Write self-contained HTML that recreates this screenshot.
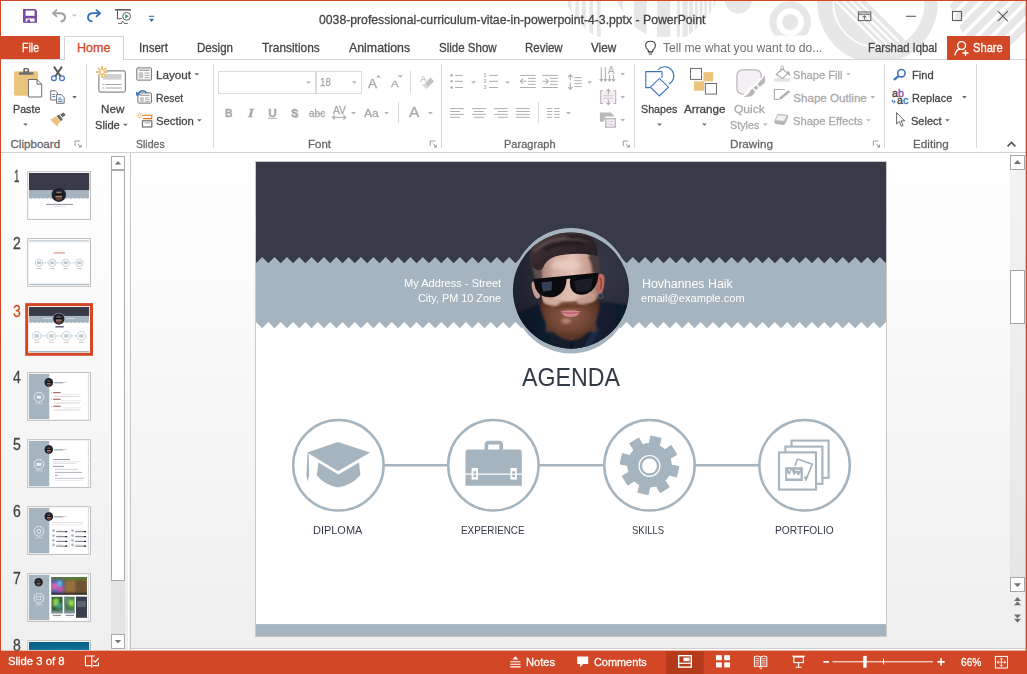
<!DOCTYPE html>
<html><head><meta charset="utf-8"><title>PowerPoint</title>
<style>
html,body{margin:0;padding:0;background:#fff;}
body{width:1027px;height:674px;position:relative;overflow:hidden;font-family:"Liberation Sans",sans-serif;}
.b{position:absolute;display:block;}
.t{position:absolute;white-space:nowrap;transform-origin:0 50%;line-height:normal;-webkit-text-stroke:0.28px;}
.t.n{-webkit-text-stroke:0;}
svg{overflow:visible;}
</style></head><body>
<div class="b" style="left:0px;top:0px;width:1027px;height:674px;background:#fff;"></div>
<div class="b" style="left:0px;top:153px;width:1027px;height:497px;background:linear-gradient(#ffffff,#f9f9f9 35%,#efefef);"></div>
<svg class="b" style="left:0;top:0;overflow:hidden" width="1027" height="60" viewBox="0 0 1027 60"><defs></defs><clipPath id="cpA"><circle cx="641" cy="-32.300" r="82.600"/></clipPath><clipPath id="cpA2"><rect x="555" y="0" width="175" height="36.800"/></clipPath><g clip-path="url(#cpA2)"><g clip-path="url(#cpA)"><rect x="567.9" y="0" width="3.8" height="40" fill="#e7e7e7"/><rect x="575.3" y="0" width="3.6" height="40" fill="#e7e7e7"/><rect x="581.9" y="0" width="3.9" height="40" fill="#e7e7e7"/><rect x="589.4" y="0" width="3.6" height="40" fill="#e7e7e7"/><rect x="596.8" y="0" width="3.9" height="40" fill="#e7e7e7"/><rect x="657.1" y="0" width="13.1" height="40" fill="#e7e7e7"/><rect x="676.8" y="0" width="3.1" height="40" fill="#e7e7e7"/><rect x="682.5" y="0" width="5.3" height="40" fill="#e7e7e7"/><rect x="689" y="0" width="4" height="40" fill="#e7e7e7"/><rect x="694.8" y="0" width="3" height="40" fill="#e7e7e7"/><rect x="699.6" y="0" width="3.1" height="40" fill="#e7e7e7"/><rect x="704.4" y="0" width="2.6" height="40" fill="#e7e7e7"/><rect x="708.8" y="0" width="2.6" height="40" fill="#e7e7e7"/><rect x="713.2" y="0" width="2.2" height="40" fill="#e7e7e7"/><rect x="717.4" y="0" width="2" height="40" fill="#e7e7e7"/><path d="M616.100 0h7v12.200z" fill="#e7e7e7"/><path d="M634 0h12.600v34.500l-12.600-8z" fill="#e7e7e7"/></g></g><circle cx="738.4" cy="0" r="13.6" fill="#e7e7e7"/><clipPath id="cpB"><rect x="760" y="0" width="60" height="35.6"/></clipPath><g clip-path="url(#cpB)"><circle cx="790.2" cy="22" r="17.2" fill="none" stroke="#e7e7e7" stroke-width="7"/><circle cx="790.2" cy="22" r="8" fill="#e7e7e7"/></g><circle cx="877.500" cy="3" r="60.300" fill="#e7e7e7"/><clipPath id="cpC"><circle cx="877.500" cy="3" r="44.500"/></clipPath><clipPath id="cpC3"><circle cx="877.500" cy="3" r="47"/></clipPath><clipPath id="cpC2"><path d="M800 -30L800 80L900 80L840 -30z"/></clipPath><g clip-path="url(#cpC3)"><path d="M865.200 0L945.200 80L990 80L990 -20L845.200 -20z" fill="#fff"/></g><g clip-path="url(#cpC)"><path d="M825.0 -10l90 90" stroke="#fff" stroke-width="2.100"/><path d="M832.4 -10l90 90" stroke="#fff" stroke-width="2.100"/><path d="M839.8 -10l90 90" stroke="#fff" stroke-width="2.100"/><path d="M847.2 -10l90 90" stroke="#fff" stroke-width="2.100"/></g><g clip-path="url(#cpC2)"><circle cx="877.500" cy="3" r="44.200" fill="none" stroke="#fff" stroke-width="1.600"/></g><clipPath id="cpD"><path d="M947.200 0L975 60h60v-60z"/></clipPath><clipPath id="cpD2"><circle cx="955" cy="75" r="106"/></clipPath><g clip-path="url(#cpD2)"><g clip-path="url(#cpD)"><path d="M970.0 -10l-90 90" stroke="#e7e7e7" stroke-width="7"/><path d="M985.2 -10l-90 90" stroke="#e7e7e7" stroke-width="7"/><path d="M1000.4 -10l-90 90" stroke="#e7e7e7" stroke-width="7"/><path d="M1015.6 -10l-90 90" stroke="#e7e7e7" stroke-width="7"/><path d="M1030.8 -10l-90 90" stroke="#e7e7e7" stroke-width="7"/><path d="M1046.0 -10l-90 90" stroke="#e7e7e7" stroke-width="7"/><path d="M1061.2 -10l-90 90" stroke="#e7e7e7" stroke-width="7"/></g></g></svg>
<span class="t" style="left:319.20px;top:12.64px;font-size:12px;color:#444;transform:scaleX(1.0184);">0038-professional-curriculum-vitae-in-powerpoint-4-3.pptx - PowerPoint</span>
<div class="b" style="left:1px;top:36px;width:59px;height:24px;background:#d24726;"></div>
<span class="t" style="left:21.80px;top:40.69px;font-size:12.5px;color:#fff;transform:scaleX(0.8440);">File</span>
<div class="b" style="left:1px;top:59px;width:1025px;height:1px;background:#d4d4d4;"></div>
<div class="b" style="left:64px;top:36px;width:60px;height:24px;background:#fff;border:1px solid #d4d4d4;border-bottom:none;box-sizing:border-box;"></div>
<span class="t" style="left:77.00px;top:40.69px;font-size:12.5px;color:#d24726;">Home</span>
<span class="t" style="left:139.20px;top:40.69px;font-size:12.5px;color:#444;transform:scaleX(0.9244);">Insert</span>
<span class="t" style="left:197.00px;top:40.69px;font-size:12.5px;color:#444;transform:scaleX(0.9252);">Design</span>
<span class="t" style="left:262.30px;top:40.69px;font-size:12.5px;color:#444;transform:scaleX(0.9511);">Transitions</span>
<span class="t" style="left:348.90px;top:40.69px;font-size:12.5px;color:#444;transform:scaleX(0.9881);">Animations</span>
<span class="t" style="left:438.50px;top:40.69px;font-size:12.5px;color:#444;transform:scaleX(0.9227);">Slide Show</span>
<span class="t" style="left:525.00px;top:40.69px;font-size:12.5px;color:#444;transform:scaleX(0.9174);">Review</span>
<span class="t" style="left:590.80px;top:40.69px;font-size:12.5px;color:#444;transform:scaleX(0.9379);">View</span>
<span class="t n" style="left:662.60px;top:40.69px;font-size:12.5px;color:#707070;transform:scaleX(0.9680);">Tell me what you want to do...</span>
<span class="t" style="left:867.90px;top:40.69px;font-size:12.5px;color:#444;transform:scaleX(0.9040);">Farshad Iqbal</span>
<div class="b" style="left:947px;top:36px;width:63px;height:24px;background:#d24726;"></div>
<span class="t" style="left:972.50px;top:40.69px;font-size:12.5px;color:#fff;transform:scaleX(0.8934);">Share</span>
<svg class="b" style="left:0;top:0" width="1027" height="60" viewBox="0 0 1027 60"><path d="M23 9h12.200l1.800 1.800v12h-14z" fill="#7b4aa6"/><rect x="25.600" y="10.600" width="9" height="5.200" fill="#fff"/><rect x="25.600" y="18.400" width="9" height="4.400" fill="#fff"/><rect x="27.400" y="19.600" width="2.600" height="3.200" fill="#7b4aa6"/><rect x="24.800" y="21.600" width="10.400" height="1.200" fill="#7b4aa6"/><path d="M53 13.200h6.600q5.400 0 5.400 4.400q0 3.400-4.400 4" fill="none" stroke="#a0a0a0" stroke-width="2"/><path d="M57 9.600l-4 3.600l4 3.600" fill="none" stroke="#a0a0a0" stroke-width="1.800"/><path d="M71.800 14.400h5.200l-2.600 2.400z" fill="#c0c0c0"/><path d="M100 13.200h-6.600q-5.400 0-5.400 4.400q0 3.400 4.400 4" fill="none" stroke="#2f6fb7" stroke-width="1.800"/><path d="M96 9.600l4 3.600l-4 3.600" fill="none" stroke="#2f6fb7" stroke-width="1.800"/><path d="M115 9.800h16" stroke="#5e5e5e" stroke-width="1.600"/><path d="M117.500 10.600v8.100h4.600" fill="none" stroke="#5e5e5e" stroke-width="1.100"/><circle cx="126.600" cy="16.300" r="3.900" fill="#fff" stroke="#5e5e5e" stroke-width="1"/><path d="M125.200 14l3.600 2.300l-3.600 2.300z" fill="#3a9b6a"/><path d="M118 23.400h4M124 23.400h4M122.600 21l-1.200 2.400M122.600 21l1.800 2.400" stroke="#5e5e5e" stroke-width="0.900"/><path d="M149 16.300h5.200" stroke="#2f6fb7" stroke-width="1.100"/><path d="M149 18.800h5.200l-2.600 3.200z" fill="#2f6fb7"/><rect x="858.400" y="12" width="12.400" height="8.600" fill="none" stroke="#5e5e5e" stroke-width="1"/><path d="M858.400 14.200h12.400" stroke="#5e5e5e" stroke-width="1"/><path d="M864.600 19.400v-3.600M862.800 17.400l1.800-1.800l1.800 1.800" fill="none" stroke="#5e5e5e" stroke-width="0.900"/><path d="M906 16.300h10" stroke="#5e5e5e" stroke-width="1.100"/><rect x="952.500" y="11.500" width="9" height="9" fill="none" stroke="#5e5e5e" stroke-width="1.100"/><path d="M997.800 11.200l10 10M1007.800 11.200l-10 10" stroke="#5e5e5e" stroke-width="1.100"/><path d="M648.300 50.200q-2.700-2-2.700-4.600q0-4.400 4.900-4.400q4.900 0 4.900 4.400q0 2.600-2.700 4.600v1.600h-4.400z" fill="none" stroke="#444" stroke-width="1.100"/><path d="M648.300 52h4.400M648.700 54h3.600" stroke="#444" stroke-width="1"/><circle cx="961.600" cy="45.500" r="3.900" fill="none" stroke="#fff" stroke-width="1.400"/><path d="M954.800 55.400q1.200-6 5.200-6.400" fill="none" stroke="#fff" stroke-width="1.400"/><path d="M962.500 53h6M965.500 50v6" stroke="#fff" stroke-width="1.400"/></svg>
<div class="b" style="left:1px;top:152px;width:1025px;height:1px;background:#d2d2d2;"></div>
<div class="b" style="left:86px;top:64px;width:1px;height:84px;background:#d8d8d8;"></div>
<div class="b" style="left:213px;top:64px;width:1px;height:84px;background:#d8d8d8;"></div>
<div class="b" style="left:441px;top:64px;width:1px;height:84px;background:#d8d8d8;"></div>
<div class="b" style="left:634px;top:64px;width:1px;height:84px;background:#d8d8d8;"></div>
<div class="b" style="left:884px;top:64px;width:1px;height:84px;background:#d8d8d8;"></div>
<div class="b" style="left:976px;top:64px;width:1px;height:84px;background:#d8d8d8;"></div>
<div class="b" style="left:410px;top:71px;width:1px;height:22px;background:#d8d8d8;"></div>
<div class="b" style="left:398px;top:102px;width:1px;height:21px;background:#d8d8d8;"></div>
<div class="b" style="left:538px;top:102px;width:1px;height:21px;background:#d8d8d8;"></div>
<span class="t" style="left:12.60px;top:102.00px;font-size:11.6px;color:#444;transform:scaleX(0.9237);">Paste</span>
<span class="t" style="left:10.50px;top:136.90px;font-size:11.6px;color:#666;">Clipboard</span>
<span class="t" style="left:100.60px;top:102.00px;font-size:11.6px;color:#444;transform:scaleX(1.0041);">New</span>
<span class="t" style="left:95.20px;top:118.00px;font-size:11.6px;color:#444;transform:scaleX(0.9614);">Slide</span>
<span class="t" style="left:155.80px;top:68.10px;font-size:11.6px;color:#444;transform:scaleX(1.0078);">Layout</span>
<span class="t" style="left:155.80px;top:90.80px;font-size:11.6px;color:#444;transform:scaleX(0.8943);">Reset</span>
<span class="t" style="left:155.50px;top:114.10px;font-size:11.6px;color:#444;transform:scaleX(0.9770);">Section</span>
<span class="t" style="left:135.50px;top:136.90px;font-size:11.6px;color:#666;transform:scaleX(0.9084);">Slides</span>
<span class="t" style="left:307.70px;top:136.90px;font-size:11.6px;color:#666;transform:scaleX(0.9909);">Font</span>
<span class="t" style="left:503.80px;top:136.90px;font-size:11.6px;color:#666;transform:scaleX(0.9525);">Paragraph</span>
<span class="t" style="left:641.30px;top:102.00px;font-size:11.6px;color:#444;transform:scaleX(0.9227);">Shapes</span>
<span class="t" style="left:683.50px;top:102.00px;font-size:11.6px;color:#444;transform:scaleX(1.0056);">Arrange</span>
<span class="t" style="left:734.40px;top:102.00px;font-size:11.6px;color:#a8a8a8;transform:scaleX(1.0387);">Quick</span>
<span class="t" style="left:730.30px;top:118.00px;font-size:11.6px;color:#a8a8a8;transform:scaleX(0.9307);">Styles</span>
<span class="t" style="left:793.30px;top:68.10px;font-size:11.6px;color:#a8a8a8;transform:scaleX(0.9577);">Shape Fill</span>
<span class="t" style="left:793.30px;top:90.80px;font-size:11.6px;color:#a8a8a8;">Shape Outline</span>
<span class="t" style="left:793.30px;top:114.10px;font-size:11.6px;color:#a8a8a8;transform:scaleX(0.9679);">Shape Effects</span>
<span class="t" style="left:729.60px;top:136.90px;font-size:11.6px;color:#666;transform:scaleX(1.0083);">Drawing</span>
<span class="t" style="left:911.70px;top:68.10px;font-size:11.6px;color:#444;transform:scaleX(0.9661);">Find</span>
<span class="t" style="left:911.70px;top:90.80px;font-size:11.6px;color:#444;transform:scaleX(0.9469);">Replace</span>
<span class="t" style="left:911.40px;top:114.10px;font-size:11.6px;color:#444;transform:scaleX(0.9491);">Select</span>
<span class="t" style="left:912.70px;top:136.90px;font-size:11.6px;color:#666;transform:scaleX(1.0093);">Editing</span>
<div class="b" style="left:218px;top:71px;width:98px;height:23px;border:1px solid #dcdcdc;box-sizing:border-box;"></div>
<div class="b" style="left:316px;top:71px;width:46px;height:23px;border:1px solid #dcdcdc;box-sizing:border-box;"></div>
<span class="t" style="left:319.80px;top:76.16px;font-size:11.2px;color:#a8a8a8;transform:scaleX(0.8749);">18</span>
<span class="t" style="left:224.50px;top:106.10px;font-size:11.6px;color:#a8a8a8;font-weight:bold;transform:scaleX(0.9072);">B</span>
<span class="t" style="left:247.60px;top:105.91px;font-size:12px;color:#a8a8a8;font-weight:bold;font-style:italic;font-family:'Liberation Serif',serif;transform:scaleX(1.2420);">I</span>
<span class="t" style="left:268.30px;top:106.10px;font-size:11.6px;color:#a8a8a8;font-weight:bold;">U</span>
<span class="t" style="left:291.40px;top:106.10px;font-size:11.6px;color:#a8a8a8;font-weight:bold;transform:scaleX(0.9306);text-shadow:1.2px 1.2px 1px #c8c8c8;">S</span>
<span class="t" style="left:308.90px;top:106.80px;font-size:10.5px;color:#a8a8a8;transform:scaleX(0.9569);">abc</span>
<span class="t" style="left:332.50px;top:104.77px;font-size:10.2px;color:#a8a8a8;transform:scaleX(1.0117);">AV</span>
<span class="t" style="left:364.30px;top:105.92px;font-size:11.8px;color:#a8a8a8;transform:scaleX(1.0323);">Aa</span>
<span class="t" style="left:409.00px;top:104.45px;font-size:14.2px;color:#a8a8a8;transform:scaleX(1.0875);">A</span>
<span class="t" style="left:368.40px;top:76.73px;font-size:11.9px;color:#a8a8a8;transform:scaleX(1.1339);">A</span>
<span class="t" style="left:391.20px;top:79.17px;font-size:9.2px;color:#a8a8a8;transform:scaleX(1.2548);">A</span>
<svg class="b" style="left:0;top:60px" width="1027" height="92" viewBox="0 60 1027 92"><path d="M23.10 123.40h4.8l-2.4 2.4z" fill="#666"/><path d="M72.10 96.00h4.8l-2.4 2.4z" fill="#666"/><path d="M123.00 123.70h4.8l-2.4 2.4z" fill="#666"/><path d="M194.30 73.20h4.8l-2.4 2.4z" fill="#666"/><path d="M197.00 119.20h4.8l-2.4 2.4z" fill="#666"/><path d="M306.00 81.30h4.8l-2.4 2.4z" fill="#b4b4b4"/><path d="M352.00 81.30h4.8l-2.4 2.4z" fill="#b4b4b4"/><path d="M351.10 112.00h4.8l-2.4 2.4z" fill="#b4b4b4"/><path d="M384.10 112.00h4.8l-2.4 2.4z" fill="#b4b4b4"/><path d="M428.00 112.00h4.8l-2.4 2.4z" fill="#b4b4b4"/><path d="M471.00 81.30h4.8l-2.4 2.4z" fill="#b4b4b4"/><path d="M505.20 81.30h4.8l-2.4 2.4z" fill="#b4b4b4"/><path d="M587.20 81.30h4.8l-2.4 2.4z" fill="#b4b4b4"/><path d="M566.00 112.00h4.8l-2.4 2.4z" fill="#b4b4b4"/><path d="M620.30 73.00h4.8l-2.4 2.4z" fill="#b4b4b4"/><path d="M620.30 96.00h4.8l-2.4 2.4z" fill="#b4b4b4"/><path d="M620.30 119.10h4.8l-2.4 2.4z" fill="#b4b4b4"/><path d="M657.10 123.40h4.8l-2.4 2.4z" fill="#666"/><path d="M702.00 123.40h4.8l-2.4 2.4z" fill="#666"/><path d="M763.00 123.40h4.8l-2.4 2.4z" fill="#b4b4b4"/><path d="M846.00 73.20h4.8l-2.4 2.4z" fill="#b4b4b4"/><path d="M870.30 96.00h4.8l-2.4 2.4z" fill="#b4b4b4"/><path d="M866.00 119.20h4.8l-2.4 2.4z" fill="#b4b4b4"/><path d="M962.00 96.00h4.8l-2.4 2.4z" fill="#666"/><path d="M945.00 119.20h4.8l-2.4 2.4z" fill="#666"/><path d="M75 146v-5h5" fill="none" stroke="#9a9a9a" stroke-width="1"/><path d="M77.6 143.6l3.4 3.4" stroke="#9c9c9c" stroke-width="1"/><path d="M81.6 144.2v3.4h-3.4z" fill="#9c9c9c"/><path d="M430.2 146v-5h5" fill="none" stroke="#9a9a9a" stroke-width="1"/><path d="M432.8 143.6l3.4 3.4" stroke="#9c9c9c" stroke-width="1"/><path d="M436.8 144.2v3.4h-3.4z" fill="#9c9c9c"/><path d="M623.3 146v-5h5" fill="none" stroke="#9a9a9a" stroke-width="1"/><path d="M625.9 143.6l3.4 3.4" stroke="#9c9c9c" stroke-width="1"/><path d="M629.9 144.2v3.4h-3.4z" fill="#9c9c9c"/><path d="M873.4 146v-5h5" fill="none" stroke="#9a9a9a" stroke-width="1"/><path d="M876.0 143.6l3.4 3.4" stroke="#9c9c9c" stroke-width="1"/><path d="M880.0 144.2v3.4h-3.4z" fill="#9c9c9c"/><path d="M1007.6 146.3l3.9-3.9l3.9 3.9" fill="none" stroke="#555" stroke-width="1.7"/><rect x="14.1" y="71.2" width="24" height="24.6" rx="1.5" fill="#eac47c"/><path d="M19 74.8v-2.6h4.2v-2.6q0-1.7 1.7-1.7h2.6q1.7 0 1.7 1.7v2.6h4.2v2.6z" fill="#6e6e6e"/><rect x="25" y="69.4" width="2.4" height="1.8" fill="#fff"/><path d="M28.4 79.5h8.6l4.7 4.7v12.8h-13.3z" fill="#fff" stroke="#6e6e6e" stroke-width="1"/><path d="M37 79.5v4.7h4.7" fill="none" stroke="#6e6e6e" stroke-width="1"/><path d="M53.900 66.600l6.700 9.800M62 66.600l-6.700 9.800" stroke="#5a5a5a" stroke-width="1.900" fill="none"/><circle cx="53.900" cy="78.300" r="2.400" fill="#fff" stroke="#3c74ba" stroke-width="1.200"/><circle cx="62" cy="78.300" r="2.400" fill="#fff" stroke="#3c74ba" stroke-width="1.200"/><path d="M50.7 90.8h4.6l2.2 2.2v7h-6.8z" fill="#fff" stroke="#6e6e6e" stroke-width="1"/><path d="M52.2 94.5h3M52.2 96.5h3" stroke="#3c74ba" stroke-width="0.9"/><path d="M56.6 94.6h4.6l3 3v5.7h-7.6z" fill="#fff" stroke="#6e6e6e" stroke-width="1"/><path d="M58.2 98h3M58.2 99.8h4.4M58.2 101.6h4.4" stroke="#3c74ba" stroke-width="0.9"/><path d="M50.3 119.6l6-3.3l4 5.2l-3.4 5z" fill="#eac47c"/><path d="M56.6 116l2.6-1.4l3.6 4.6l-2 2z" fill="#666"/><path d="M60.2 114.3l3.6-1.8l1.8 2.4l-3.2 2.4z" fill="#666"/><rect x="98.9" y="70.9" width="26.4" height="21.2" rx="1.2" fill="#fff" stroke="#6e6e6e" stroke-width="1"/><rect x="103" y="74" width="18.6" height="5.6" fill="#d0d0d0"/><path d="M102.5 84.5h1.6M105.5 84.5h16M102.5 88h1.6M105.5 88h16" stroke="#9a9a9a" stroke-width="0.9"/><circle cx="102.100" cy="72" r="4.400" fill="#fff"/><g stroke="#eac47c" stroke-width="1.900"><path d="M102.100 65.900v12.200M96 72h12.200M97.800 67.700l8.600 8.600M106.400 67.700l-8.600 8.600"/></g><circle cx="102.100" cy="72" r="1.700" fill="#fff"/><rect x="136.8" y="67.9" width="14.6" height="12.2" rx="0.8" fill="#fff" stroke="#6e6e6e" stroke-width="1"/><path d="M138.6 70.2h11" stroke="#9a9a9a" stroke-width="1.2"/><rect x="138.6" y="72.3" width="4.6" height="6" fill="#c4c4c4"/><path d="M144.6 73h5M144.6 75.3h5M144.6 77.6h5" stroke="#9a9a9a" stroke-width="0.9"/><rect x="137.9" y="92.9" width="13.5" height="10.2" rx="0.8" fill="#fff" stroke="#6e6e6e" stroke-width="1"/><path d="M140 95.3h9.6" stroke="#9a9a9a" stroke-width="1.1"/><rect x="139.8" y="97.2" width="4" height="4.6" fill="#c4c4c4"/><path d="M145 97.8h4.6M145 99.7h4.6M145 101.5h4.6" stroke="#9a9a9a" stroke-width="0.8"/><path d="M138 94.200q1.400-3.400 4.800-3.400q2.600 0 3.800 2.200" fill="none" stroke="#3c74ba" stroke-width="1.500"/><path d="M135.800 91.400l0.600 4.600l4.400-1.200z" fill="#3c74ba"/><g stroke="#eac47c" stroke-width="1"><path d="M139.700 112.200v6.600M136.400 115.500h6.600M137.400 113.200l4.600 4.600M142 113.200l-4.600 4.600"/></g><circle cx="139.700" cy="115.500" r="1" fill="#fff"/><path d="M142.800 115.300h9v3.300h-9" fill="none" stroke="#e0761f" stroke-width="1.100"/><rect x="142.500" y="120.800" width="9.300" height="6.200" fill="#fff" stroke="#6e6e6e" stroke-width="1.200"/><path d="M144.600 122.800h5.400" stroke="#c8c8c8" stroke-width="1.600"/><path d="M376 77.6l2.5-2.5l2.5 2.5z" fill="#b0b0b0"/><path d="M397.8 75.2h5l-2.5 2.5z" fill="#b0b0b0"/><path d="M268 118.3h9" stroke="#b0b0b0" stroke-width="1"/><path d="M308.5 113.7h17" stroke="#b0b0b0" stroke-width="0.9"/><path d="M332.400 117.400h13.400" stroke="#b0b0b0" stroke-width="1.200"/><path d="M334.800 115.300l-2.300 2.100l2.300 2.100M343.400 115.300l2.300 2.100l-2.300 2.100" fill="none" stroke="#b0b0b0" stroke-width="1.200"/><text x="420.200" y="82" font-size="9" fill="#b0b0b0" font-family="Liberation Sans, sans-serif">A</text><path d="M425 83.400l5.500-5.800l3.600 3.700l-5.800 5.800z" fill="#c2c2c2"/><path d="M421.800 84.900l3.200-1.500l3.300 3.700l-1.500 2.200z" fill="#d9d9d9"/><circle cx="451.6" cy="75.4" r="1.3" fill="#b0b0b0"/><path d="M455 75.4H463" stroke="#b0b0b0" stroke-width="1"/><path d="M489 75.4H498" stroke="#b0b0b0" stroke-width="1"/><circle cx="451.6" cy="81.3" r="1.3" fill="#b0b0b0"/><path d="M455 81.3H463" stroke="#b0b0b0" stroke-width="1"/><path d="M489 81.3H498" stroke="#b0b0b0" stroke-width="1"/><circle cx="451.6" cy="87.5" r="1.3" fill="#b0b0b0"/><path d="M455 87.5H463" stroke="#b0b0b0" stroke-width="1"/><path d="M489 87.5H498" stroke="#b0b0b0" stroke-width="1"/><text x="483.6" y="77.3" font-size="5.2" font-weight="bold" fill="#b0b0b0" font-family="Liberation Sans, sans-serif">1</text><text x="483.6" y="83.2" font-size="5.2" font-weight="bold" fill="#b0b0b0" font-family="Liberation Sans, sans-serif">2</text><text x="483.6" y="89.4" font-size="5.2" font-weight="bold" fill="#b0b0b0" font-family="Liberation Sans, sans-serif">3</text><path d="M520 75.4H535.7" stroke="#b0b0b0" stroke-width="1"/><path d="M520 87.5H535.7" stroke="#b0b0b0" stroke-width="1"/><path d="M528 78.4H535.7" stroke="#b0b0b0" stroke-width="1"/><path d="M528 81.3H535.7" stroke="#b0b0b0" stroke-width="1"/><path d="M528 84.4H535.7" stroke="#b0b0b0" stroke-width="1"/><path d="M542.1 75.4H557.8000000000001" stroke="#b0b0b0" stroke-width="1"/><path d="M542.1 87.5H557.8000000000001" stroke="#b0b0b0" stroke-width="1"/><path d="M550.1 78.4H557.8000000000001" stroke="#b0b0b0" stroke-width="1"/><path d="M550.1 81.3H557.8000000000001" stroke="#b0b0b0" stroke-width="1"/><path d="M550.1 84.4H557.8000000000001" stroke="#b0b0b0" stroke-width="1"/><path d="M520.4 81.3h6M523 78.7l-2.6 2.6l2.6 2.6" fill="none" stroke="#b0b0b0" stroke-width="1.1"/><path d="M542.3 81.3h6M545.7 78.7l2.6 2.6l-2.6 2.6" fill="none" stroke="#b0b0b0" stroke-width="1.1"/><path d="M570.300 74.800v5.400M568 77.200l2.300-2.500l2.300 2.500M570.300 82.800v6.400M568 86.800l2.300 2.500l2.300-2.500" fill="none" stroke="#b0b0b0" stroke-width="1.200"/><path d="M574.3 77.6H581.7" stroke="#b0b0b0" stroke-width="1"/><path d="M574.3 80.7H581.7" stroke="#b0b0b0" stroke-width="1"/><path d="M574.3 83.6H581.7" stroke="#b0b0b0" stroke-width="1"/><path d="M574.3 86.6H581.7" stroke="#b0b0b0" stroke-width="1"/><path d="M450 108.6H463.8" stroke="#b0b0b0" stroke-width="1"/><path d="M472 108.6H485.9" stroke="#b0b0b0" stroke-width="1"/><path d="M493.9 108.6H507.7" stroke="#b0b0b0" stroke-width="1"/><path d="M516.1 108.6H529.9" stroke="#b0b0b0" stroke-width="1"/><path d="M546.9 108.6H552.4" stroke="#b0b0b0" stroke-width="1"/><path d="M554.2 108.6H559.7" stroke="#b0b0b0" stroke-width="1"/><path d="M450 111.5H459.8" stroke="#b0b0b0" stroke-width="1"/><path d="M474 111.5H483.9" stroke="#b0b0b0" stroke-width="1"/><path d="M497.9 111.5H507.7" stroke="#b0b0b0" stroke-width="1"/><path d="M516.1 111.5H529.9" stroke="#b0b0b0" stroke-width="1"/><path d="M546.9 111.5H552.4" stroke="#b0b0b0" stroke-width="1"/><path d="M554.2 111.5H559.7" stroke="#b0b0b0" stroke-width="1"/><path d="M450 114.4H463.8" stroke="#b0b0b0" stroke-width="1"/><path d="M472 114.4H485.9" stroke="#b0b0b0" stroke-width="1"/><path d="M493.9 114.4H507.7" stroke="#b0b0b0" stroke-width="1"/><path d="M516.1 114.4H529.9" stroke="#b0b0b0" stroke-width="1"/><path d="M546.9 114.4H552.4" stroke="#b0b0b0" stroke-width="1"/><path d="M554.2 114.4H559.7" stroke="#b0b0b0" stroke-width="1"/><path d="M450 117.3H459.8" stroke="#b0b0b0" stroke-width="1"/><path d="M474 117.3H483.9" stroke="#b0b0b0" stroke-width="1"/><path d="M497.9 117.3H507.7" stroke="#b0b0b0" stroke-width="1"/><path d="M516.1 117.3H529.9" stroke="#b0b0b0" stroke-width="1"/><path d="M546.9 117.3H552.4" stroke="#b0b0b0" stroke-width="1"/><path d="M554.2 117.3H559.7" stroke="#b0b0b0" stroke-width="1"/><path d="M601.300 67.200v13.600M605.400 67.200v13.600M599.700 79.200l1.600 1.900l1.600-1.900M603.800 79.200l1.600 1.900l1.600-1.900M609.600 75v5.800M613.500 75v5.800M608 79.200l1.600 1.900l1.600-1.900M611.900 79.200l1.600 1.900l1.600-1.900" fill="none" stroke="#b0b0b0" stroke-width="1.100"/><text x="607.800" y="74.200" font-size="10" fill="#b0b0b0" font-family="Liberation Sans, sans-serif">A</text><rect x="601" y="90.700" width="14.200" height="12.400" fill="#f5eff5"/><path d="M603 90.700h-2.300v12.800h2.300M613.400 90.700h2.300v12.800h-2.300" fill="none" stroke="#b8b2b8" stroke-width="1.100"/><path d="M603.400 95.700h9.600M603.400 98.300h9.600" stroke="#cfc4cf" stroke-width="1.100"/><path d="M608.400 89.400v4.800M606.400 91.400l2-2.100l2 2.100M608.400 104.600v-4.800M606.400 102.600l2 2.100l2-2.100" fill="none" stroke="#b0b0b0" stroke-width="1.100"/><path d="M599.900 112.400h10.900l4.200 4.100h-9.400l-2.100 5.200h-3.600z" fill="#b9b9b9"/><rect x="605.700" y="118.700" width="9.600" height="8.400" fill="#f5eff5" stroke="#b4b0b4" stroke-width="1.200"/><path d="M607.600 121.400h1M609.600 121.400h3.600M607.600 124.300h1M609.600 124.300h3.600" stroke="#c4b8c4" stroke-width="0.900"/><path d="M658.100 69.600A9.100 9.100 0 1 1 669 83.900" fill="none" stroke="#3c74ba" stroke-width="1.1"/><path d="M662 71.6h-16.2v16h4.6" fill="none" stroke="#3c74ba" stroke-width="1.1"/><path d="M662 71.6v6.4" stroke="#3c74ba" stroke-width="1.1"/><path d="M659.4 78.4l9 8.8l-9 8.8l-9-8.8z" fill="#fff" stroke="#3c74ba" stroke-width="1.1"/><rect x="703.4" y="72.1" width="9.8" height="9.2" fill="#eac47c"/><rect x="694" y="81.3" width="10.2" height="9.4" fill="#eac47c"/><rect x="690.5" y="68.4" width="11" height="11" fill="#fff" stroke="#6e6e6e" stroke-width="1"/><rect x="705.4" y="83.5" width="11.1" height="10.6" fill="#fff" stroke="#6e6e6e" stroke-width="1"/><rect x="736.900" y="69.900" width="24.300" height="24.200" rx="5.500" fill="#f5f0f5" stroke="#b9b4b9" stroke-width="1.200"/><path d="M766 73L753.600 85L748.400 88.600L741.500 97.600L756 97.600L766 88Z" fill="#fff"/><path d="M765 75.600v6.800l-5.400 4.600l-2.200-2.700z" fill="#b8b8b8"/><path d="M756.200 85.400l2.200 2.700l-2.400 2l-2.400-2.600z" fill="#b0b0b0"/><path d="M752.400 88.400l2.600 2.800q-0.600 4-5 5.400l-6.600 0.600q6-3.400 6.600-6q1-2.400 2.400-2.800z" fill="#b6b6b6"/><rect x="774.200" y="78.100" width="15.900" height="3.600" fill="#e8dfe8"/><path d="M776.300 74.500l5.700-5.700l5.700 4.600l-5.200 5.200z" fill="#fff" stroke="#b0b0b0" stroke-width="1.200" stroke-linejoin="round"/><path d="M780.900 72v-4.600q0-1.500 1.300-1.500q1.300 0 1.300 1.500v2.600" fill="none" stroke="#b0b0b0" stroke-width="1"/><path d="M787.400 70.800q2.800 1 2.700 5q-2.200-0.400-3.200-2.400z" fill="#b0b0b0"/><path d="M785 89.500h-10.600v9.900h4.500" fill="none" stroke="#b0b0b0" stroke-width="1.200"/><path d="M788.600 90.300l1.500 1.800l-8.500 7l-2.500 0.600l0.700-2.400z" fill="#b0b0b0"/><path d="M774.300 121l3-6.400q0.500-0.800 1.400-0.700l8.300 0.900q1.700 0.800 1.100 2.600l-2.700 6.200q-0.700 1.400-2.200 1.300l-7.400-0.800q-2-0.800-1.500-3.100z" fill="#b9b6b9"/><path d="M775.400 120.200l2.600-5.300l8.800 0.900l-2.700 5.400z" fill="#f4f0f4" stroke="#c4c0c4" stroke-width="0.600"/><circle cx="901.4" cy="73.2" r="3.7" fill="#fff" stroke="#3c74ba" stroke-width="1.600"/><path d="M898.600 76.200l-4.800 3.600" stroke="#3c74ba" stroke-width="2.300"/><text x="891.900" y="96.800" font-size="10.600" fill="#444" stroke="#444" stroke-width="0.35" font-family="Liberation Sans, sans-serif">a</text><text x="898" y="96.800" font-size="10.600" fill="#8a4fa8" stroke="#8a4fa8" stroke-width="0.35" font-family="Liberation Sans, sans-serif">b</text><text x="897.100" y="103.500" font-size="10.600" fill="#444" stroke="#444" stroke-width="0.35" font-family="Liberation Sans, sans-serif">a</text><text x="903" y="103.500" font-size="10.600" fill="#3c74ba" stroke="#3c74ba" stroke-width="0.35" font-family="Liberation Sans, sans-serif">c</text><path d="M892.300 99.600v2.200h2.600M893.700 100.400l1.500 1.400l-1.500 1.400" fill="none" stroke="#3c74ba" stroke-width="1"/><path d="M896.600 112.600v11.400l2.700-2.500l2.100 4.800l1.700-0.800l-2.100-4.600h3.700z" fill="#fff" stroke="#555" stroke-width="0.900"/></svg>
<svg class="b" style="left:0;top:153px;overflow:hidden" width="128" height="497" viewBox="0 153 128 497"><rect x="27.700" y="171.7" width="62.800" height="47.700" fill="#fff" stroke="#bdbdbd" stroke-width="1"/><g transform="translate(29,173.00)"><rect width="60.2" height="17.5" fill="#383b47"/><polygon points="0.00,17.15 2.00,17.85 4.00,17.15 6.00,17.85 8.00,17.15 10.00,17.85 12.00,17.15 14.00,17.85 16.00,17.15 18.00,17.85 20.00,17.15 22.00,17.85 24.00,17.15 26.00,17.85 28.00,17.15 30.00,17.85 32.00,17.15 34.00,17.85 36.00,17.15 38.00,17.85 40.00,17.15 42.00,17.85 44.00,17.15 46.00,17.85 48.00,17.15 50.00,17.85 52.00,17.15 54.00,17.85 56.00,17.15 58.00,17.85 60.00,17.15 60.00,25.05 58.00,25.75 56.00,25.05 54.00,25.75 52.00,25.05 50.00,25.75 48.00,25.05 46.00,25.75 44.00,25.05 42.00,25.75 40.00,25.05 38.00,25.75 36.00,25.05 34.00,25.75 32.00,25.05 30.00,25.75 28.00,25.05 26.00,25.75 24.00,25.05 22.00,25.75 20.00,25.05 18.00,25.75 16.00,25.05 14.00,25.75 12.00,25.05 10.00,25.75 8.00,25.05 6.00,25.75 4.00,25.05 2.00,25.75 0.00,25.05" fill="#a5b4be"/><circle cx="29.8" cy="21.7" r="7.3" fill="#383b47"/><circle cx="29.8" cy="21.7" r="6.7" fill="#1d202b"/><ellipse cx="29.8" cy="22.50" rx="3.35" ry="4.56" fill="#c39e90"/><path d="M26.32 20.36q3.48 -4.69 6.97 0q-3.48 -2.01 -6.97 0z" fill="#3a2c2a"/><rect x="26.05" y="20.23" width="7.50" height="2.41" rx="0.67" fill="#08080c"/><path d="M26.58 23.71h6.43q-0.67 3.69 -3.22 4.15q-2.55 -0.47 -3.22 -4.15z" fill="#6a4032"/><path d="M17.1 31.4H43.9" stroke="#6a7282" stroke-width="0.8" opacity="1"/><path d="M24.6 33.6H36.8" stroke="#c9cfd6" stroke-width="0.6" opacity="1"/></g><rect x="27.700" y="238.6" width="62.800" height="47.700" fill="#fff" stroke="#bdbdbd" stroke-width="1"/><g transform="translate(29,239.90)"><path d="M0 1H60.2" stroke="#a5b4be" stroke-width="0.9" opacity="1"/><path d="M0 2.1H60.2" stroke="#dfe6ea" stroke-width="0.5" opacity="1"/><path d="M0 44.6H60.2" stroke="#a5b4be" stroke-width="0.9" opacity="1"/><path d="M0 43.5H60.2" stroke="#dfe6ea" stroke-width="0.5" opacity="1"/><path d="M24.5 13H36" stroke="#c98a78" stroke-width="1.4" opacity="0.75"/><path d="M10 22.9H50.4" stroke="#a5b4be" stroke-width="0.5" opacity="1"/><circle cx="10" cy="22.9" r="3.700" fill="#fff" stroke="#a5b4be" stroke-width="0.600"/><rect x="8" y="21.5" width="4" height="2.800" fill="#a5b4be" opacity="0.750"/><path d="M7.5 28.7H12.5" stroke="#a0a4ac" stroke-width="0.6" opacity="1"/><circle cx="23.3" cy="22.9" r="3.700" fill="#fff" stroke="#a5b4be" stroke-width="0.600"/><rect x="21.3" y="21.5" width="4" height="2.800" fill="#a5b4be" opacity="0.750"/><path d="M20.8 28.7H25.8" stroke="#a0a4ac" stroke-width="0.6" opacity="1"/><circle cx="36.8" cy="22.9" r="3.700" fill="#fff" stroke="#a5b4be" stroke-width="0.600"/><rect x="34.8" y="21.5" width="4" height="2.800" fill="#a5b4be" opacity="0.750"/><path d="M34.3 28.7H39.3" stroke="#a0a4ac" stroke-width="0.6" opacity="1"/><circle cx="50.4" cy="22.9" r="3.700" fill="#fff" stroke="#a5b4be" stroke-width="0.600"/><rect x="48.4" y="21.5" width="4" height="2.800" fill="#a5b4be" opacity="0.750"/><path d="M47.9 28.7H52.9" stroke="#a0a4ac" stroke-width="0.6" opacity="1"/></g><rect x="26.700" y="304.600" width="64.800" height="49.700" fill="#fff" stroke="#d24726" stroke-width="3"/><g transform="translate(29,307.00)"><rect width="60.2" height="9" fill="#383b47"/><polygon points="0.00,8.70 2.00,9.30 4.00,8.70 6.00,9.30 8.00,8.70 10.00,9.30 12.00,8.70 14.00,9.30 16.00,8.70 18.00,9.30 20.00,8.70 22.00,9.30 24.00,8.70 26.00,9.30 28.00,8.70 30.00,9.30 32.00,8.70 34.00,9.30 36.00,8.70 38.00,9.30 40.00,8.70 42.00,9.30 44.00,8.70 46.00,9.30 48.00,8.70 50.00,9.30 52.00,8.70 54.00,9.30 56.00,8.70 58.00,9.30 60.00,8.70 60.00,15.30 58.00,15.90 56.00,15.30 54.00,15.90 52.00,15.30 50.00,15.90 48.00,15.30 46.00,15.90 44.00,15.30 42.00,15.90 40.00,15.30 38.00,15.90 36.00,15.30 34.00,15.90 32.00,15.30 30.00,15.90 28.00,15.30 26.00,15.90 24.00,15.30 22.00,15.90 20.00,15.30 18.00,15.90 16.00,15.30 14.00,15.90 12.00,15.30 10.00,15.90 8.00,15.30 6.00,15.90 4.00,15.30 2.00,15.90 0.00,15.30" fill="#a5b4be"/><circle cx="29.8" cy="11.8" r="6.100" fill="#a5b4be"/><circle cx="29.8" cy="11.8" r="5.6" fill="#1d202b"/><ellipse cx="29.8" cy="12.47" rx="2.80" ry="3.81" fill="#c39e90"/><path d="M26.89 10.68q2.91 -3.92 5.82 0q-2.91 -1.68 -5.82 0z" fill="#3a2c2a"/><rect x="26.66" y="10.57" width="6.27" height="2.02" rx="0.56" fill="#08080c"/><path d="M27.11 13.48h5.38q-0.56 3.08 -2.69 3.47q-2.13 -0.39 -2.69 -3.47z" fill="#6a4032"/><path d="M14 11.5H23" stroke="#eef2f5" stroke-width="0.7" opacity="0.8"/><path d="M37 11.5H46" stroke="#eef2f5" stroke-width="0.7" opacity="0.8"/><path d="M26.4 19.8H34.8" stroke="#4a505e" stroke-width="1.3" opacity="1"/><path d="M7.7 28.9H52.2" stroke="#a5b4be" stroke-width="0.5" opacity="1"/><circle cx="7.7" cy="28.9" r="4.400" fill="#fff" stroke="#a5b4be" stroke-width="0.600"/><rect x="5.5" y="27.300" width="4.400" height="3.200" fill="#a5b4be" opacity="0.700"/><path d="M5.1 35.4H10.3" stroke="#b9a79a" stroke-width="0.6" opacity="1"/><circle cx="22.4" cy="28.9" r="4.400" fill="#fff" stroke="#a5b4be" stroke-width="0.600"/><rect x="20.2" y="27.300" width="4.400" height="3.200" fill="#a5b4be" opacity="0.700"/><path d="M19.799999999999997 35.4H25.0" stroke="#b9a79a" stroke-width="0.6" opacity="1"/><circle cx="37.4" cy="28.9" r="4.400" fill="#fff" stroke="#a5b4be" stroke-width="0.600"/><rect x="35.199999999999996" y="27.300" width="4.400" height="3.200" fill="#a5b4be" opacity="0.700"/><path d="M34.8 35.4H40.0" stroke="#b9a79a" stroke-width="0.6" opacity="1"/><circle cx="52.2" cy="28.9" r="4.400" fill="#fff" stroke="#a5b4be" stroke-width="0.600"/><rect x="50.0" y="27.300" width="4.400" height="3.200" fill="#a5b4be" opacity="0.700"/><path d="M49.6 35.4H54.800000000000004" stroke="#b9a79a" stroke-width="0.6" opacity="1"/><rect x="0" y="44" width="60.2" height="1.200" fill="#a5b4be"/></g><rect x="27.700" y="372.6" width="62.800" height="47.700" fill="#fff" stroke="#bdbdbd" stroke-width="1"/><g transform="translate(29,373.90)"><rect x="0" y="0" width="20" height="45.2" fill="#a5b4be"/><path d="M20.3 0V45.2" stroke="#a5b4be" stroke-width="0.7" stroke-dasharray="0.8 0.8"/><path d="M59.4 0V45.2" stroke="#a5b4be" stroke-width="0.7" stroke-dasharray="1.6 0.7"/><circle cx="9.9" cy="23.3" r="4.8" fill="none" stroke="#fff" stroke-width="0.900" stroke-dasharray="1.500 0.400"/><path d="M6 29.8H14" stroke="#e4eaee" stroke-width="0.7" opacity="0.8"/><circle cx="19.8" cy="8.5" r="4.300" fill="#383b47"/><circle cx="19.8" cy="8.5" r="3.9" fill="#1d202b"/><ellipse cx="19.8" cy="8.97" rx="1.95" ry="2.65" fill="#c39e90"/><path d="M17.77 7.72q2.03 -2.73 4.06 0q-2.03 -1.17 -4.06 0z" fill="#3a2c2a"/><rect x="17.62" y="7.64" width="4.37" height="1.40" rx="0.39" fill="#08080c"/><path d="M17.93 9.67h3.74q-0.39 2.15 -1.87 2.42q-1.48 -0.27 -1.87 -2.42z" fill="#6a4032"/><path d="M25 8.9H34.5" stroke="#7c8390" stroke-width="0.9" opacity="1"/><path d="M35 8.3H38" stroke="#8fcfc4" stroke-width="0.6" opacity="1"/><rect x="7.600" y="21.900" width="4.600" height="2.600" rx="1" fill="#eef2f5"/><path d="M24.2 18.7H31.6" stroke="#8a4a4a" stroke-width="1.2" opacity="0.8"/><path d="M32 20.2H52" stroke="#d0d4da" stroke-width="0.5" opacity="1"/><path d="M25 22.4H50.5" stroke="#c4b4b8" stroke-width="0.6" opacity="1"/><path d="M22.3 18.7H23" stroke="#8a909a" stroke-width="0.8" opacity="1"/><path d="M24.2 25.4H31.6" stroke="#8a4a4a" stroke-width="1.2" opacity="0.8"/><path d="M32 26.9H52" stroke="#d0d4da" stroke-width="0.5" opacity="1"/><path d="M25 29.099999999999998H50.5" stroke="#c4b4b8" stroke-width="0.6" opacity="1"/><path d="M22.3 25.4H23" stroke="#8a909a" stroke-width="0.8" opacity="1"/><path d="M24.2 32.4H31.6" stroke="#8a4a4a" stroke-width="1.2" opacity="0.8"/><path d="M32 33.9H52" stroke="#d0d4da" stroke-width="0.5" opacity="1"/><path d="M25 36.1H50.5" stroke="#c4b4b8" stroke-width="0.6" opacity="1"/><path d="M22.3 32.4H23" stroke="#8a909a" stroke-width="0.8" opacity="1"/></g><rect x="27.700" y="439.7" width="62.800" height="47.700" fill="#fff" stroke="#bdbdbd" stroke-width="1"/><g transform="translate(29,441.00)"><rect x="0" y="0" width="20" height="45.2" fill="#a5b4be"/><path d="M20.3 0V45.2" stroke="#a5b4be" stroke-width="0.7" stroke-dasharray="0.8 0.8"/><path d="M59.4 0V45.2" stroke="#a5b4be" stroke-width="0.7" stroke-dasharray="1.6 0.7"/><circle cx="9.9" cy="23.3" r="4.8" fill="none" stroke="#fff" stroke-width="0.900" stroke-dasharray="1.500 0.400"/><path d="M6 29.8H14" stroke="#e4eaee" stroke-width="0.7" opacity="0.8"/><circle cx="19.8" cy="8.5" r="4.300" fill="#383b47"/><circle cx="19.8" cy="8.5" r="3.9" fill="#1d202b"/><ellipse cx="19.8" cy="8.97" rx="1.95" ry="2.65" fill="#c39e90"/><path d="M17.77 7.72q2.03 -2.73 4.06 0q-2.03 -1.17 -4.06 0z" fill="#3a2c2a"/><rect x="17.62" y="7.64" width="4.37" height="1.40" rx="0.39" fill="#08080c"/><path d="M17.93 9.67h3.74q-0.39 2.15 -1.87 2.42q-1.48 -0.27 -1.87 -2.42z" fill="#6a4032"/><path d="M25 8.9H34.5" stroke="#7c8390" stroke-width="0.9" opacity="1"/><path d="M35 8.3H38" stroke="#8fcfc4" stroke-width="0.6" opacity="1"/><rect x="7.400" y="22" width="5" height="2.800" fill="#eef2f5"/><path d="M24 18.5H41" stroke="#6a7080" stroke-width="0.7" opacity="1"/><path d="M24 20.6H52" stroke="#dcdfe4" stroke-width="0.7" opacity="1"/><path d="M24 22.3H47" stroke="#c8ccd2" stroke-width="0.7" opacity="1"/><path d="M24 25.4H35" stroke="#6a7080" stroke-width="0.7" opacity="1"/><path d="M26 28.3H49" stroke="#b8bcc4" stroke-width="0.7" opacity="1"/><path d="M26 31.4H53" stroke="#8a909c" stroke-width="0.7" opacity="1"/><path d="M26 34.4H29" stroke="#8a909c" stroke-width="0.7" opacity="1"/><path d="M26 37.4H55" stroke="#b0b5be" stroke-width="0.7" opacity="1"/><path d="M26 39.4H55" stroke="#e0e3e8" stroke-width="0.7" opacity="1"/></g><rect x="27.700" y="506.7" width="62.800" height="47.700" fill="#fff" stroke="#bdbdbd" stroke-width="1"/><g transform="translate(29,508.00)"><rect x="0" y="0" width="20" height="45.2" fill="#a5b4be"/><path d="M20.3 0V45.2" stroke="#a5b4be" stroke-width="0.7" stroke-dasharray="0.8 0.8"/><path d="M59.4 0V45.2" stroke="#a5b4be" stroke-width="0.7" stroke-dasharray="1.6 0.7"/><circle cx="9.9" cy="23.3" r="4.8" fill="none" stroke="#fff" stroke-width="0.900" stroke-dasharray="1.500 0.400"/><path d="M6 29.8H14" stroke="#e4eaee" stroke-width="0.7" opacity="0.8"/><circle cx="19.8" cy="8.5" r="4.300" fill="#383b47"/><circle cx="19.8" cy="8.5" r="3.9" fill="#1d202b"/><ellipse cx="19.8" cy="8.97" rx="1.95" ry="2.65" fill="#c39e90"/><path d="M17.77 7.72q2.03 -2.73 4.06 0q-2.03 -1.17 -4.06 0z" fill="#3a2c2a"/><rect x="17.62" y="7.64" width="4.37" height="1.40" rx="0.39" fill="#08080c"/><path d="M17.93 9.67h3.74q-0.39 2.15 -1.87 2.42q-1.48 -0.27 -1.87 -2.42z" fill="#6a4032"/><path d="M25 8.9H34.5" stroke="#7c8390" stroke-width="0.9" opacity="1"/><path d="M35 8.3H38" stroke="#8fcfc4" stroke-width="0.6" opacity="1"/><circle cx="9.900" cy="23.300" r="2" fill="none" stroke="#eef2f5" stroke-width="1"/><path d="M23 14.7H54" stroke="#d8c8c4" stroke-width="0.6" opacity="1"/><path d="M23 16.8H53.5" stroke="#d4d8de" stroke-width="0.6" opacity="1"/><path d="M40.400 21V40" stroke="#c8ccd2" stroke-width="0.400"/><circle cx="24.6" cy="22.6" r="1.400" fill="#a5b4be" opacity="0.900"/><path d="M27.200000000000003 23.7H38.2" stroke="#4a5060" stroke-width="0.8" opacity="1"/><path d="M36.2 23.7H38.2" stroke="#14161c" stroke-width="1" opacity="1"/><path d="M27.6 22.2H33.6" stroke="#d0d6dc" stroke-width="0.5" opacity="1"/><circle cx="43.5" cy="22.6" r="1.400" fill="#a5b4be" opacity="0.900"/><path d="M46.1 23.7H57.1" stroke="#4a5060" stroke-width="0.8" opacity="1"/><path d="M55.1 23.7H57.1" stroke="#14161c" stroke-width="1" opacity="1"/><path d="M46.5 22.2H52.5" stroke="#d0d6dc" stroke-width="0.5" opacity="1"/><circle cx="24.6" cy="27.6" r="1.400" fill="#a5b4be" opacity="0.900"/><path d="M27.200000000000003 28.7H38.2" stroke="#4a5060" stroke-width="0.8" opacity="1"/><path d="M36.2 28.7H38.2" stroke="#14161c" stroke-width="1" opacity="1"/><path d="M27.6 27.2H33.6" stroke="#d0d6dc" stroke-width="0.5" opacity="1"/><circle cx="43.5" cy="27.6" r="1.400" fill="#a5b4be" opacity="0.900"/><path d="M46.1 28.7H57.1" stroke="#4a5060" stroke-width="0.8" opacity="1"/><path d="M55.1 28.7H57.1" stroke="#14161c" stroke-width="1" opacity="1"/><path d="M46.5 27.2H52.5" stroke="#d0d6dc" stroke-width="0.5" opacity="1"/><circle cx="24.6" cy="32.300000000000004" r="1.400" fill="#a5b4be" opacity="0.900"/><path d="M27.200000000000003 33.400000000000006H38.2" stroke="#4a5060" stroke-width="0.8" opacity="1"/><path d="M36.2 33.400000000000006H38.2" stroke="#14161c" stroke-width="1" opacity="1"/><path d="M27.6 31.900000000000002H33.6" stroke="#d0d6dc" stroke-width="0.5" opacity="1"/><circle cx="43.5" cy="32.300000000000004" r="1.400" fill="#a5b4be" opacity="0.900"/><path d="M46.1 33.400000000000006H57.1" stroke="#4a5060" stroke-width="0.8" opacity="1"/><path d="M55.1 33.400000000000006H57.1" stroke="#14161c" stroke-width="1" opacity="1"/><path d="M46.5 31.900000000000002H52.5" stroke="#d0d6dc" stroke-width="0.5" opacity="1"/><circle cx="24.6" cy="37.0" r="1.400" fill="#a5b4be" opacity="0.900"/><path d="M27.200000000000003 38.1H38.2" stroke="#4a5060" stroke-width="0.8" opacity="1"/><path d="M36.2 38.1H38.2" stroke="#14161c" stroke-width="1" opacity="1"/><path d="M27.6 36.6H33.6" stroke="#d0d6dc" stroke-width="0.5" opacity="1"/><circle cx="43.5" cy="37.0" r="1.400" fill="#a5b4be" opacity="0.900"/><path d="M46.1 38.1H57.1" stroke="#4a5060" stroke-width="0.8" opacity="1"/><path d="M55.1 38.1H57.1" stroke="#14161c" stroke-width="1" opacity="1"/><path d="M46.5 36.6H52.5" stroke="#d0d6dc" stroke-width="0.5" opacity="1"/></g><rect x="27.700" y="573.7" width="62.800" height="47.700" fill="#fff" stroke="#bdbdbd" stroke-width="1"/><g transform="translate(29,575.00)"><rect x="0" y="0" width="20" height="45.2" fill="#a5b4be"/><path d="M20.3 0V45.2" stroke="#a5b4be" stroke-width="0.7" stroke-dasharray="0.8 0.8"/><path d="M59.4 0V45.2" stroke="#a5b4be" stroke-width="0.7" stroke-dasharray="1.6 0.7"/><circle cx="9.9" cy="23.2" r="4.8" fill="none" stroke="#fff" stroke-width="0.900" stroke-dasharray="1.500 0.400"/><path d="M6 29.7H14" stroke="#e4eaee" stroke-width="0.7" opacity="0.8"/><circle cx="9.600" cy="7.200" r="4.200" fill="#383b47"/><circle cx="9.6" cy="7.2" r="3.8" fill="#1d202b"/><ellipse cx="9.6" cy="7.66" rx="1.90" ry="2.58" fill="#c39e90"/><path d="M7.62 6.44q1.98 -2.66 3.95 0q-1.98 -1.14 -3.95 0z" fill="#3a2c2a"/><rect x="7.47" y="6.36" width="4.26" height="1.37" rx="0.38" fill="#08080c"/><path d="M7.78 8.34h3.65q-0.38 2.09 -1.82 2.36q-1.44 -0.27 -1.82 -2.36z" fill="#6a4032"/><path d="M4 12.9H16" stroke="#c2b8a8" stroke-width="0.6" opacity="0.8"/><rect x="7.800" y="21.400" width="4" height="3.400" fill="none" stroke="#eef2f5" stroke-width="0.600"/><defs><filter id="tb" x="-10%" y="-10%" width="120%" height="120%"><feGaussianBlur stdDeviation="0.9"/></filter><clipPath id="tc1"><rect x="22.300" y="1.900" width="35.700" height="17.800"/></clipPath><clipPath id="tc2"><rect x="22.300" y="21.600" width="11.400" height="16.800"/></clipPath><clipPath id="tc3"><rect x="35.200" y="21.600" width="10.600" height="16.800"/></clipPath></defs><g clip-path="url(#tc1)"><rect x="22.300" y="1.900" width="35.700" height="17.800" fill="#7a6240"/><g filter="url(#tb)"><rect x="20" y="0" width="15" height="22" fill="#4e66b0"/><rect x="23" y="8.500" width="5" height="6" fill="#e060b0"/><rect x="28.500" y="6" width="4" height="5" fill="#60c0e0"/><rect x="29" y="12" width="5" height="4" fill="#d050a0"/><rect x="21" y="0" width="14" height="5" fill="#5a7040"/><rect x="34.500" y="0" width="25" height="5.500" fill="#567a38"/><rect x="37" y="6" width="9" height="11" fill="#96703c"/><rect x="47" y="5" width="10" height="12" fill="#6e5230"/><rect x="20" y="17.600" width="40" height="4" fill="#2e2a28"/></g></g><g clip-path="url(#tc2)"><rect x="22.300" y="21.600" width="11.400" height="16.800" fill="#2f5a34"/><g filter="url(#tb)"><rect x="24" y="23.500" width="6" height="8" fill="#8ad04a"/><rect x="28" y="28" width="5" height="6" fill="#3a9a8a"/><rect x="21" y="35.800" width="14" height="4" fill="#8a98a4"/></g></g><g clip-path="url(#tc3)"><rect x="35.200" y="21.600" width="10.600" height="16.800" fill="#4f7a54"/><g filter="url(#tb)"><rect x="40" y="25" width="5" height="6" fill="#9ad848"/><rect x="35" y="21" width="5" height="8" fill="#6a8a7a"/><rect x="34" y="35.800" width="13" height="4" fill="#8a98a4"/></g></g><rect x="47" y="21.600" width="11" height="21.200" fill="#3a3f4c"/><rect x="48.200" y="26" width="8.600" height="6" fill="#6a7280" opacity="0.700"/><path d="M23.8 40.4H32" stroke="#5a4a5a" stroke-width="0.7" opacity="1"/><path d="M36.6 40.4H45" stroke="#4a5070" stroke-width="0.7" opacity="1"/><path d="M24.5 42.2H31" stroke="#dcd8d0" stroke-width="0.5" opacity="1"/><path d="M37.5 42.2H44" stroke="#dcd8d0" stroke-width="0.5" opacity="1"/></g><rect x="27.700" y="640.7" width="62.800" height="47.700" fill="#fff" stroke="#bdbdbd" stroke-width="1"/><g transform="translate(29,642.00)"><defs><radialGradient id="g8" cx="0.6" cy="1.2" r="1"><stop offset="0" stop-color="#1a8cb6"/><stop offset="1" stop-color="#0a6288"/></radialGradient></defs><rect width="60.2" height="10" fill="url(#g8)"/></g></svg>
<span class="t" style="left:13.80px;top:166.75px;font-size:16.3px;color:#444;transform:scaleX(0.5957);">1</span>
<span class="t" style="left:13.10px;top:234.25px;font-size:16.3px;color:#444;transform:scaleX(0.8604);">2</span>
<span class="t" style="left:13.10px;top:301.55px;font-size:16.3px;color:#d24726;transform:scaleX(0.8604);">3</span>
<span class="t" style="left:13.10px;top:368.35px;font-size:16.3px;color:#444;transform:scaleX(0.8604);">4</span>
<span class="t" style="left:13.10px;top:435.35px;font-size:16.3px;color:#444;transform:scaleX(0.8604);">5</span>
<span class="t" style="left:13.10px;top:502.35px;font-size:16.3px;color:#444;transform:scaleX(0.8604);">6</span>
<span class="t" style="left:13.10px;top:569.35px;font-size:16.3px;color:#444;transform:scaleX(0.8604);">7</span>
<span class="t" style="left:13.10px;top:636.45px;font-size:16.3px;color:#444;transform:scaleX(0.8604);">8</span>
<div class="b" style="left:111px;top:156px;width:14px;height:14px;background:#fff;border:1px solid #ababab;box-sizing:border-box;"></div>
<div class="b" style="left:111px;top:170px;width:14px;height:465px;background:#e4e4e4;"></div>
<div class="b" style="left:111px;top:170px;width:14px;height:411px;background:#fff;border:1px solid #ababab;box-sizing:border-box;"></div>
<div class="b" style="left:111px;top:634px;width:14px;height:15px;background:#fff;border:1px solid #ababab;box-sizing:border-box;"></div>
<svg class="b" style="left:111px;top:156px" width="14" height="493" viewBox="0 0 14 493"><path d="M3.800 8.600l3.200-3.600l3.200 3.600z" fill="#777"/><path d="M3.800 484h6.400l-3.200 3.600z" fill="#777"/></svg>
<div class="b" style="left:128px;top:153px;width:1px;height:497px;background:#fdfdfd;"></div>
<div class="b" style="left:130px;top:153px;width:1px;height:497px;background:#c6c6c6;"></div>
<svg class="b" style="left:0;top:153px" width="1027" height="497" viewBox="0 153 1027 497"><rect x="255.5" y="161.5" width="631" height="475" fill="#fff" stroke="#c9c9c9" stroke-width="1"/><rect x="256" y="162" width="630" height="102" fill="#383b47"/><polygon points="256.00,263.2 262.18,257 268.35,263.2 274.53,257 280.71,263.2 286.88,257 293.06,263.2 299.24,257 305.41,263.2 311.59,257 317.76,263.2 323.94,257 330.12,263.2 336.29,257 342.47,263.2 348.65,257 354.82,263.2 361.00,257 367.18,263.2 373.35,257 379.53,263.2 385.71,257 391.88,263.2 398.06,257 404.24,263.2 410.41,257 416.59,263.2 422.76,257 428.94,263.2 435.12,257 441.29,263.2 447.47,257 453.65,263.2 459.82,257 466.00,263.2 472.18,257 478.35,263.2 484.53,257 490.71,263.2 496.88,257 503.06,263.2 509.24,257 515.41,263.2 521.59,257 527.76,263.2 533.94,257 540.12,263.2 546.29,257 552.47,263.2 558.65,257 564.82,263.2 571.00,257 577.18,263.2 583.35,257 589.53,263.2 595.71,257 601.88,263.2 608.06,257 614.24,263.2 620.41,257 626.59,263.2 632.76,257 638.94,263.2 645.12,257 651.29,263.2 657.47,257 663.65,263.2 669.82,257 676.00,263.2 682.18,257 688.35,263.2 694.53,257 700.71,263.2 706.88,257 713.06,263.2 719.24,257 725.41,263.2 731.59,257 737.76,263.2 743.94,257 750.12,263.2 756.29,257 762.47,263.2 768.65,257 774.82,263.2 781.00,257 787.18,263.2 793.35,257 799.53,263.2 805.71,257 811.88,263.2 818.06,257 824.24,263.2 830.41,257 836.59,263.2 842.76,257 848.94,263.2 855.12,257 861.29,263.2 867.47,257 873.65,263.2 879.82,257 886.00,263.2 886.00,322 879.82,328.2 873.65,322 867.47,328.2 861.29,322 855.12,328.2 848.94,322 842.76,328.2 836.59,322 830.41,328.2 824.24,322 818.06,328.2 811.88,322 805.71,328.2 799.53,322 793.35,328.2 787.18,322 781.00,328.2 774.82,322 768.65,328.2 762.47,322 756.29,328.2 750.12,322 743.94,328.2 737.76,322 731.59,328.2 725.41,322 719.24,328.2 713.06,322 706.88,328.2 700.71,322 694.53,328.2 688.35,322 682.18,328.2 676.00,322 669.82,328.2 663.65,322 657.47,328.2 651.29,322 645.12,328.2 638.94,322 632.76,328.2 626.59,322 620.41,328.2 614.24,322 608.06,328.2 601.88,322 595.71,328.2 589.53,322 583.35,328.2 577.18,322 571.00,328.2 564.82,322 558.65,328.2 552.47,322 546.29,328.2 540.12,322 533.94,328.2 527.76,322 521.59,328.2 515.41,322 509.24,328.2 503.06,322 496.88,328.2 490.71,322 484.53,328.2 478.35,322 472.18,328.2 466.00,322 459.82,328.2 453.65,322 447.47,328.2 441.29,322 435.12,328.2 428.94,322 422.76,328.2 416.59,322 410.41,328.2 404.24,322 398.06,328.2 391.88,322 385.71,328.2 379.53,322 373.35,328.2 367.18,322 361.00,328.2 354.82,322 348.65,328.2 342.47,322 336.29,328.2 330.12,322 323.94,328.2 317.76,322 311.59,328.2 305.41,322 299.24,328.2 293.06,322 286.88,328.2 280.71,322 274.53,328.2 268.35,322 262.18,328.2 256.00,322" fill="#a5b4be"/><rect x="256" y="624.100" width="630" height="11.900" fill="#a5b4be"/><path d="M338.5 465.200H804.500" stroke="#a5b4be" stroke-width="2.500"/><circle cx="338.4" cy="465.3" r="45.200" fill="#fff" stroke="#a5b4be" stroke-width="2.500"/><circle cx="493.4" cy="465.3" r="45.200" fill="#fff" stroke="#a5b4be" stroke-width="2.500"/><circle cx="649.5" cy="465.3" r="45.200" fill="#fff" stroke="#a5b4be" stroke-width="2.500"/><circle cx="804.6" cy="465.3" r="45.200" fill="#fff" stroke="#a5b4be" stroke-width="2.500"/><path d="M307 452.4l31-10.400l32 10.400l-32 18.800z" fill="#a5b4be"/><path d="M318.400 462.600l20 11.800l20.600-12l1.400 12.600q-8 10-22.400 12.400q-13-2.400-21.200-12z" fill="#a5b4be"/><path d="M307.400 453.600l1.200 0l0.600 22l-1.400 6l-1.400-6z" fill="#a5b4be"/><path d="M465.400 485.800v-33.400q0-3 3-3h50.400q3 0 3 3v33.400z" fill="#a5b4be"/><path d="M486.400 450v-5.200q0-2.200 2.200-2.200h10.400q2.200 0 2.200 2.200v5.200" fill="none" stroke="#a5b4be" stroke-width="3.600"/><path d="M465 474.200h57" stroke="#fff" stroke-width="1.300"/><rect x="471.6" y="468" width="6.400" height="11.600" fill="#fff"/><rect x="473.40000000000003" y="471.200" width="2.800" height="2.400" fill="#a5b4be"/><rect x="473.40000000000003" y="474.800" width="2.800" height="2.400" fill="#a5b4be"/><rect x="510.4" y="468" width="6.400" height="11.600" fill="#fff"/><rect x="512.1999999999999" y="471.200" width="2.800" height="2.400" fill="#a5b4be"/><rect x="512.1999999999999" y="474.800" width="2.800" height="2.400" fill="#a5b4be"/><circle cx="649.5" cy="465.3" r="22.2" fill="#a5b4be"/><path d="M649.31 443.70 L650.78 435.93 L661.22 438.34 L659.14 445.97 L664.64 449.89 L671.18 445.44 L676.85 454.52 L669.98 458.45 L671.10 465.11 L678.87 466.58 L676.46 477.02 L668.83 474.94 L664.91 480.44 L669.36 486.98 L660.28 492.65 L656.35 485.78 L649.69 486.90 L648.22 494.67 L637.78 492.26 L639.86 484.63 L634.36 480.71 L627.82 485.16 L622.15 476.08 L629.02 472.15 L627.90 465.49 L620.13 464.02 L622.54 453.58 L630.17 455.66 L634.09 450.16 L629.64 443.62 L638.72 437.95 L642.65 444.82Z" fill="#a5b4be" stroke="#a5b4be" stroke-width="1" stroke-linejoin="round"/><circle cx="649.5" cy="465.90000000000003" r="10.4" fill="none" stroke="#fff" stroke-width="1.2"/><circle cx="649.5" cy="465.90000000000003" r="7.4" fill="#fff"/><rect x="791.6" y="440.6" width="37" height="37.200" fill="#fff" stroke="#a5b4be" stroke-width="2.100"/><rect x="785.4" y="446.6" width="37" height="37.200" fill="#fff" stroke="#a5b4be" stroke-width="2.100"/><rect x="779" y="452.4" width="37" height="37.200" fill="#fff" stroke="#a5b4be" stroke-width="2.100"/><path d="M797.400 459l14.800 5.200l-6.600 16.400" fill="none" stroke="#a5b4be" stroke-width="1.700"/><path d="M797.400 459l-2.400 7" fill="none" stroke="#a5b4be" stroke-width="1.700"/><path d="M803.600 477l2 3.600l2.600-5.200z" fill="#a5b4be"/><rect x="785.200" y="467.200" width="17.600" height="13.800" fill="#a5b4be"/><path d="M787 478.600v-6l2.400 2.400l2.200-5l2.600 5.600l2-3.200l2.200 3.400l2.200-3v5.800z" fill="#fff"/><circle cx="789.400" cy="470" r="1" fill="#fff"/><path d="M795 470.300h5" stroke="#fff" stroke-width="0.8"/><defs><clipPath id="phc"><ellipse cx="571" cy="290.500" rx="58.100" ry="57.900"/></clipPath><radialGradient id="phbg" cx="0.72" cy="0.3" r="0.8"><stop offset="0" stop-color="#353845"/><stop offset="0.55" stop-color="#282b37"/><stop offset="1" stop-color="#1c1e29"/></radialGradient><linearGradient id="skin" x1="0" y1="0" x2="1" y2="0"><stop offset="0" stop-color="#a98378"/><stop offset="0.25" stop-color="#d2ada0"/><stop offset="0.55" stop-color="#e2c2b5"/><stop offset="0.85" stop-color="#c39a8c"/><stop offset="1" stop-color="#9a6f63"/></linearGradient><linearGradient id="hairg" x1="0" y1="0" x2="1" y2="1"><stop offset="0" stop-color="#665654"/><stop offset="0.3" stop-color="#3b2e32"/><stop offset="0.7" stop-color="#282024"/><stop offset="1" stop-color="#33282b"/></linearGradient><radialGradient id="beardg" cx="0.5" cy="0.45" r="0.62"><stop offset="0" stop-color="#8c5c46"/><stop offset="0.55" stop-color="#704433"/><stop offset="0.85" stop-color="#523024"/><stop offset="1" stop-color="#38221c"/></radialGradient><linearGradient id="shirtg" x1="0" y1="0" x2="1" y2="0"><stop offset="0" stop-color="#0d1422"/><stop offset="0.6" stop-color="#152135"/><stop offset="1" stop-color="#0f1726"/></linearGradient><filter id="bl1" x="-20%" y="-20%" width="140%" height="140%"><feGaussianBlur stdDeviation="1.1"/></filter><filter id="bl2" x="-20%" y="-20%" width="140%" height="140%"><feGaussianBlur stdDeviation="2"/></filter><filter id="bl05" x="-20%" y="-20%" width="140%" height="140%"><feGaussianBlur stdDeviation="0.55"/></filter></defs><ellipse cx="571" cy="290.800" rx="59.700" ry="62.800" fill="#a5b4be"/><g clip-path="url(#phc)"><rect x="508" y="228" width="126" height="126" fill="url(#phbg)"/><path d="M506 316q18-6 34-12l10 4l44-2l6-5q16 2 38 6v50h-132z" fill="url(#shirtg)" filter="url(#bl1)"/><path d="M586 318q10 4 14 12l-12 22h-14z" fill="#1b2b44" filter="url(#bl1)"/><path d="M552 326l19 20l20-22l2 6l-14 24h-18z" fill="#121b2c" filter="url(#bl05)"/><path d="M571.500 341v12" stroke="#0a0f1a" stroke-width="1.400"/><path d="M546 300h50v32h-50z" fill="#5a3a30" filter="url(#bl1)"/><path d="M597.500 274.500q5.500-2.500 7 2.500q0.500 9-2.500 16q-2.500 4-5.500 1z" fill="#c0685c" filter="url(#bl05)"/><path d="M600 278q2.500 4 0.500 11" stroke="#8a3c36" stroke-width="1.200" fill="none" filter="url(#bl05)"/><path d="M538 281q-5.500-2-6.500 3q0.500 8 4 13.500q2.500 2.500 4.500-0.500z" fill="#c39c92" filter="url(#bl05)"/><path d="M540 268q-1-16 28-17q27 0 28.500 15l2.500 30q-1.500 24-27.500 44q-25-15-30-44z" fill="url(#skin)" filter="url(#bl05)"/><path d="M531 258q1 10 4.500 22l7-1.500q-2-12 3-22z" fill="#5e4e4c" filter="url(#bl1)"/><path d="M597 254q3.500 10 1.500 20l-6-0.500q0-9-4.500-17z" fill="#4e3e3e" filter="url(#bl1)"/><path d="M530 264q-2.500-15 7.500-24q8-6.500 25-7.500q19-1 29 5q6 6 6.500 19q-5-3-12-2.500q-18-1-31 2.500q-9 3-12.500 12q-6 5-12.500-4.500z" fill="url(#hairg)" filter="url(#bl05)"/><path d="M534 252q12-13 36-14.500" fill="none" stroke="#84706c" stroke-width="2.200" opacity="0.500" filter="url(#bl1)"/><path d="M544 250q16-9 40-6.500" fill="none" stroke="#171114" stroke-width="2.600" opacity="0.650" filter="url(#bl1)"/><path d="M556 241q14-4.500 30 0.500" fill="none" stroke="#6a5a5a" stroke-width="1.600" opacity="0.550" filter="url(#bl1)"/><path d="M566 236q12-1.500 22 3" fill="none" stroke="#181215" stroke-width="1.800" opacity="0.600" filter="url(#bl1)"/><ellipse cx="566" cy="265" rx="15" ry="5" fill="#ecd2c8" opacity="0.700" filter="url(#bl2)"/><path d="M539.500 298q3 5 8 6q8-1 14-2q8-1.500 16-1q8 0 12 1.500q6-1 9.500-6.500q2.500 12-3 24q-6 12-16 18.500q-9 4-18 0q-12-7-18-20q-5-11-4.500-20.500z" fill="url(#beardg)" filter="url(#bl1)"/><path d="M543 296q10 6 20 4l-6 6q-8 0-13-4z" fill="#cfa99c" filter="url(#bl1)"/><path d="M576 299q10 0 20-7l-1 8q-8 5-17 4z" fill="#c59c8e" filter="url(#bl1)"/><path d="M553 309q6-5 16-4.500q12-0.500 20 4q-8-1-18-1q-10 0-18 1.500z" fill="#6a3f2e" filter="url(#bl05)"/><path d="M560.500 311.500q10-2.500 20 0q-3 5.500-10 5.500q-7 0-10-5.500z" fill="#d4868f" filter="url(#bl05)"/><path d="M561 312.500q9.500 1.500 19 0" stroke="#a8525e" stroke-width="0.900" fill="none"/><ellipse cx="566" cy="321" rx="5" ry="3" fill="#c0907e" opacity="0.700" filter="url(#bl1)"/><path d="M566 282l-3.500 17q6.500 4 13 0l-2.500-17z" fill="#dfbcb0" filter="url(#bl1)"/><path d="M534 280l31-2.500q1.500 0 1.500 2q-0.500 14-12.500 17.500q-14 2-18.500-8.500q-1.500-4-1.500-8.500z" fill="#0a0a0f"/><path d="M570.500 277l27-3.500q1.500 0 1 2q-1.500 14.500-12 18.500q-12 3-16-6.500q-1.500-5 0-10.500z" fill="#0a0a0f"/><path d="M533.500 279l64-6.200v3.200l-64 6.200z" fill="#0a0a0f"/><path d="M541.500 282.500l10.500-1.200l-0.500 9l-8 1.500q-2-4-2-9.300z" fill="#3d4c62" opacity="0.850" filter="url(#bl05)"/><path d="M574 281q9-2 19-3l-2 11q-8 5-15 2z" fill="#1b1c26" filter="url(#bl05)"/><circle cx="600.700" cy="296" r="2.800" fill="#4a5064"/><circle cx="600.700" cy="296" r="1.500" fill="#2a2e3c"/></g></svg>
<span class="t n" style="left:404.10px;top:277.41px;font-size:10.6px;color:#fff;transform:scaleX(1.0443);">My Address - Street</span>
<span class="t n" style="left:417.80px;top:292.01px;font-size:10.6px;color:#fff;transform:scaleX(1.0247);">City, PM 10 Zone</span>
<span class="t n" style="left:641.60px;top:276.94px;font-size:12px;color:#fff;transform:scaleX(1.0301);">Hovhannes Haik</span>
<span class="t n" style="left:641.40px;top:292.11px;font-size:10.6px;color:#fff;transform:scaleX(1.0471);">email@example.com</span>
<span class="t n" style="left:522.00px;top:362.90px;font-size:25.3px;color:#333a47;transform:scaleX(0.9163);">AGENDA</span>
<span class="t n" style="left:313.00px;top:523.86px;font-size:11.2px;color:#333a47;transform:scaleX(0.9799);">DIPLOMA</span>
<span class="t n" style="left:461.40px;top:523.86px;font-size:11.2px;color:#333a47;transform:scaleX(0.8809);">EXPERIENCE</span>
<span class="t n" style="left:632.40px;top:523.86px;font-size:11.2px;color:#333a47;transform:scaleX(0.8478);">SKILLS</span>
<span class="t n" style="left:774.60px;top:523.86px;font-size:11.2px;color:#333a47;transform:scaleX(0.9114);">PORTFOLIO</span>
<div class="b" style="left:131px;top:648px;width:895px;height:1px;background:#d0d0d0;"></div>
<div class="b" style="left:131px;top:649px;width:895px;height:2px;background:#fafafa;"></div>
<div class="b" style="left:1010px;top:155px;width:15px;height:437px;background:#ededed;background:linear-gradient(#f3f3f3,#e6e6e6);"></div>
<div class="b" style="left:1010px;top:155px;width:15px;height:15px;background:#fff;border:1px solid #a6a6a6;box-sizing:border-box;"></div>
<div class="b" style="left:1010px;top:270px;width:15px;height:54px;background:#fff;border:1px solid #a6a6a6;box-sizing:border-box;"></div>
<div class="b" style="left:1010px;top:577px;width:15px;height:15px;background:#fff;border:1px solid #a6a6a6;box-sizing:border-box;"></div>
<svg class="b" style="left:1010px;top:155px" width="15" height="480" viewBox="1010 155 15 480"><path d="M1013.900 164.100l3.600-4.100l3.600 4.100z" fill="#707070"/><path d="M1013.900 583.200h7.200l-3.600 3.800z" fill="#707070"/><path d="M1014 601l3.500-3.900l3.500 3.900zM1014 605.200l3.500-3.900l3.500 3.900z" fill="#707070"/><path d="M1014 614.600h7l-3.500 3.900zM1014 618.800h7l-3.500 3.900z" fill="#707070"/></svg>
<svg class="b" style="left:0;top:648px" width="1027" height="26" viewBox="0 648 1027 26"><rect x="0" y="650.600" width="1027" height="24" fill="#d24726"/><rect x="666.200" y="651.400" width="37.500" height="22.600" fill="#b53a1c"/><path d="M85.400 656v9.600h5.600M98.400 662.500v3.100h-5.600M85.400 656h6.400v9.600M91.800 656h3" fill="none" stroke="#fff" stroke-width="1.100"/><path d="M91.800 665.600v2" stroke="#fff" stroke-width="1.100"/><path d="M93.400 660.300l1.900 1.900l3.400-4.200" fill="none" stroke="#fff" stroke-width="1.200"/><path d="M510.200 661.800h10.400M510.200 664.300h10.400M510.200 666.900h10.400" stroke="#fff" stroke-width="1.100"/><path d="M512.400 659.600l3-3.400l3 3.400z" fill="#fff"/><path d="M577.200 656.500h11v7.400h-5l-3 3.400v-3.400h-3z" fill="#fff"/><rect x="678.700" y="655.700" width="12.600" height="11.400" fill="none" stroke="#fff" stroke-width="1.400"/><rect x="683.400" y="657.600" width="6.200" height="3.600" fill="#fff"/><path d="M678.700 663.300h12.600" stroke="#fff" stroke-width="1.200"/><rect x="716" y="655.2" width="5.800" height="5" fill="#fff"/><rect x="716" y="662.4" width="5.800" height="5" fill="#fff"/><rect x="724.2" y="655.2" width="5.800" height="5" fill="#fff"/><rect x="724.2" y="662.4" width="5.800" height="5" fill="#fff"/><path d="M754.400 656.600q3-1.200 6 0.200v10q-3-1.400-6-0.200zM766.800 656.600q-3-1.200-6 0.200v10q3-1.400 6-0.200z" fill="none" stroke="#fff" stroke-width="1"/><path d="M755.600 658.6h3.600M762 658.6h3.600" stroke="#fff" stroke-width="0.700"/><path d="M755.600 660.4h3.600M762 660.4h3.600" stroke="#fff" stroke-width="0.700"/><path d="M755.600 662.2h3.600M762 662.2h3.600" stroke="#fff" stroke-width="0.700"/><path d="M755.600 664h3.600M762 664h3.600" stroke="#fff" stroke-width="0.700"/><path d="M759.300 667.500l1.500 1.400l1.500-1.400" fill="none" stroke="#fff" stroke-width="0.900"/><path d="M792.400 656.300h12.400" stroke="#fff" stroke-width="1.300"/><rect x="793.900" y="657" width="9.400" height="5.600" fill="none" stroke="#fff" stroke-width="1.100"/><path d="M798.600 662.600v4.400M795.600 667.300h6" stroke="#fff" stroke-width="1.100"/><rect x="823.400" y="661" width="5.600" height="1.700" fill="#fff"/><path d="M832.500 661.800h100.500" stroke="#fff" stroke-width="1"/><rect x="863.200" y="655.900" width="3.500" height="11.800" fill="#fff"/><path d="M883.500 658.600v5.800" stroke="#fff" stroke-width="1"/><path d="M937.500 661.800h7.200M941.100 658.200v7.200" stroke="#fff" stroke-width="1.700"/><rect x="995.400" y="656.400" width="12" height="11.600" fill="none" stroke="#fff" stroke-width="1"/><path d="M1001.400 658v8.400M997 662.200h8.800" stroke="#fff" stroke-width="0.800"/><path d="M1000 659.600l1.400-1.600l1.400 1.600M1000 664.800l1.400 1.600l1.400-1.600M998.600 660.800l-1.600 1.400l1.600 1.400M1004.200 660.800l1.600 1.400l-1.600 1.400" fill="none" stroke="#fff" stroke-width="0.800"/></svg>
<span class="t" style="left:8.30px;top:655.48px;font-size:11.4px;color:#fff;transform:scaleX(0.9923);">Slide 3 of 8</span>
<span class="t" style="left:526.40px;top:655.98px;font-size:11.4px;color:#fff;transform:scaleX(0.9738);">Notes</span>
<span class="t" style="left:593.70px;top:655.98px;font-size:11.4px;color:#fff;transform:scaleX(0.9562);">Comments</span>
<span class="t" style="left:960.50px;top:655.76px;font-size:11.2px;color:#fff;transform:scaleX(0.9056);">66%</span>
<div class="b" style="left:0px;top:0px;width:1027px;height:1px;background:#d24726;"></div>
<div class="b" style="left:0px;top:0px;width:1px;height:674px;background:#d24726;"></div>
<div class="b" style="left:1025px;top:0px;width:1px;height:674px;background:rgba(210,71,38,0.35);"></div>
<div class="b" style="left:1026px;top:0px;width:1px;height:674px;background:#d24726;"></div>
</body></html>
